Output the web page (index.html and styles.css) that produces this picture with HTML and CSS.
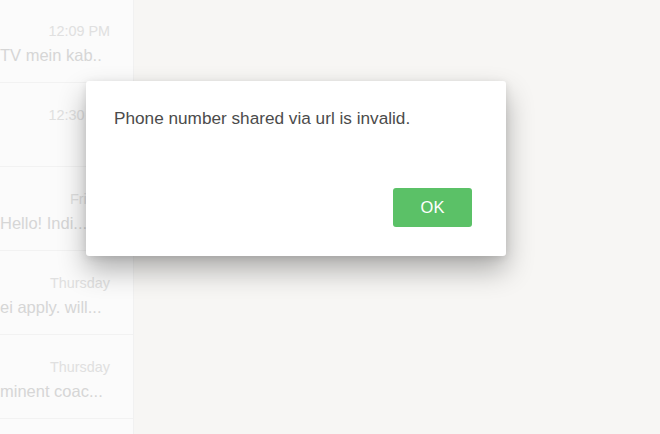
FILE: index.html
```html
<!DOCTYPE html>
<html lang="en">
<head>
    <meta charset="UTF-8">
    <meta name="viewport" content="width=device-width, initial-scale=1.0">
    <title>WhatsApp</title>
    <link rel="stylesheet" href="styles.css">
</head>
<body>
    <div class="app">
        <div class="chat-list">
            <div class="chat-row">
                <div class="chat-time">12:09 PM</div>
                <div class="chat-preview">TV mein kab..</div>
            </div>
            <div class="chat-row">
                <div class="chat-time">12:30 PM</div>
                <div class="chat-preview"></div>
            </div>
            <div class="chat-row">
                <div class="chat-time">Friday</div>
                <div class="chat-preview">Hello! Indi...</div>
            </div>
            <div class="chat-row">
                <div class="chat-time">Thursday</div>
                <div class="chat-preview">ei apply. will...</div>
            </div>
            <div class="chat-row">
                <div class="chat-time">Thursday</div>
                <div class="chat-preview">minent coac...</div>
            </div>
        </div>
        <div class="chat-pane"></div>
    </div>

    <div class="overlay">
        <div class="dialog">
            <p class="dialog-text">Phone number shared via url is invalid.</p>
            <div class="dialog-actions">
                <button class="btn-ok">OK</button>
            </div>
        </div>
    </div>
</body>
</html>
```

FILE: styles.css
```css
body {
    margin: 0;
    font-family: "Liberation Sans", Arial, sans-serif;
    overflow: hidden;
}
.app {
    display: flex;
    height: 434px;
}
.chat-list {
    width: 133px;
    background-color: #fbfbfb;
    border-right: 1px solid #f1f1f1;
    overflow: hidden;
}
.chat-row {
    height: 84px;
    border-bottom: 1px solid #f2f2f2;
    padding-right: 23px;
    box-sizing: border-box;
}
.chat-row:first-child {
    margin-top: -1px;
}
.chat-time {
    padding-top: 24px;
    text-align: right;
    font-size: 14.4px;
    color: #e0e0e0;
    height: 17px;
    white-space: nowrap;
}
.chat-preview {
    margin-top: 6px;
    font-size: 16.5px;
    color: #d6d6d6;
    white-space: nowrap;
    height: 19px;
}
.chat-pane {
    flex: 1;
    background-color: #f7f6f4;
}
.overlay {
    position: absolute;
    top: 0;
    left: 0;
    right: 0;
    bottom: 0;
}
.dialog {
    position: absolute;
    left: 86px;
    top: 81px;
    width: 420px;
    height: 175px;
    box-sizing: border-box;
    padding: 26px 34px 28px 28px;
    background-color: white;
    border-radius: 3px;
    box-shadow: 0 14px 28px rgba(0, 0, 0, 0.3), 0 2px 8px rgba(0, 0, 0, 0.1);
}
.dialog-text {
    margin: 0;
    font-size: 17.2px;
    color: #4b4b4b;
    line-height: 22px;
}
.dialog-actions {
    display: flex;
    justify-content: flex-end;
    margin-top: 59px;
}
.btn-ok {
    width: 79px;
    height: 39px;
    background-color: #5bc167;
    color: white;
    border: none;
    border-radius: 3px;
    font-family: "Liberation Sans", Arial, sans-serif;
    font-size: 16.5px;
    cursor: pointer;
}
```
